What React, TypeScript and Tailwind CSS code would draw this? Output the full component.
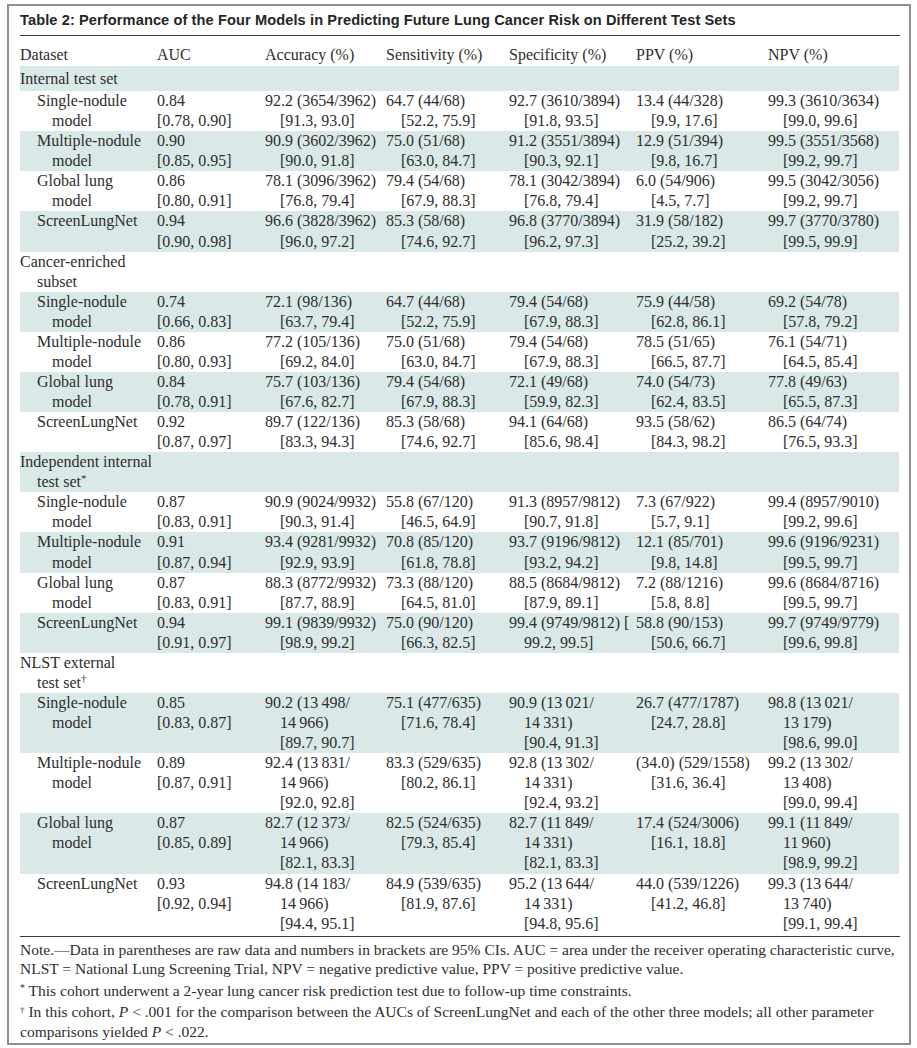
import React from "react";

type Row = {
  label: string[];
  cells: string[][];
  group?: boolean;
};

const t = "\u2009";

const rows: Row[] = [
  { label: ["Internal test set"], cells: [], group: true },
  {
    label: ["Single-nodule", "model"],
    cells: [
      ["0.84", "[0.78, 0.90]"],
      ["92.2 (3654/3962)", "[91.3, 93.0]"],
      ["64.7 (44/68)", "[52.2, 75.9]"],
      ["92.7 (3610/3894)", "[91.8, 93.5]"],
      ["13.4 (44/328)", "[9.9, 17.6]"],
      ["99.3 (3610/3634)", "[99.0, 99.6]"],
    ],
  },
  {
    label: ["Multiple-nodule", "model"],
    cells: [
      ["0.90", "[0.85, 0.95]"],
      ["90.9 (3602/3962)", "[90.0, 91.8]"],
      ["75.0 (51/68)", "[63.0, 84.7]"],
      ["91.2 (3551/3894)", "[90.3, 92.1]"],
      ["12.9 (51/394)", "[9.8, 16.7]"],
      ["99.5 (3551/3568)", "[99.2, 99.7]"],
    ],
  },
  {
    label: ["Global lung", "model"],
    cells: [
      ["0.86", "[0.80, 0.91]"],
      ["78.1 (3096/3962)", "[76.8, 79.4]"],
      ["79.4 (54/68)", "[67.9, 88.3]"],
      ["78.1 (3042/3894)", "[76.8, 79.4]"],
      ["6.0 (54/906)", "[4.5, 7.7]"],
      ["99.5 (3042/3056)", "[99.2, 99.7]"],
    ],
  },
  {
    label: ["ScreenLungNet"],
    cells: [
      ["0.94", "[0.90, 0.98]"],
      ["96.6 (3828/3962)", "[96.0, 97.2]"],
      ["85.3 (58/68)", "[74.6, 92.7]"],
      ["96.8 (3770/3894)", "[96.2, 97.3]"],
      ["31.9 (58/182)", "[25.2, 39.2]"],
      ["99.7 (3770/3780)", "[99.5, 99.9]"],
    ],
  },
  { label: ["Cancer-enriched", "subset"], cells: [], group: true },
  {
    label: ["Single-nodule", "model"],
    cells: [
      ["0.74", "[0.66, 0.83]"],
      ["72.1 (98/136)", "[63.7, 79.4]"],
      ["64.7 (44/68)", "[52.2, 75.9]"],
      ["79.4 (54/68)", "[67.9, 88.3]"],
      ["75.9 (44/58)", "[62.8, 86.1]"],
      ["69.2 (54/78)", "[57.8, 79.2]"],
    ],
  },
  {
    label: ["Multiple-nodule", "model"],
    cells: [
      ["0.86", "[0.80, 0.93]"],
      ["77.2 (105/136)", "[69.2, 84.0]"],
      ["75.0 (51/68)", "[63.0, 84.7]"],
      ["79.4 (54/68)", "[67.9, 88.3]"],
      ["78.5 (51/65)", "[66.5, 87.7]"],
      ["76.1 (54/71)", "[64.5, 85.4]"],
    ],
  },
  {
    label: ["Global lung", "model"],
    cells: [
      ["0.84", "[0.78, 0.91]"],
      ["75.7 (103/136)", "[67.6, 82.7]"],
      ["79.4 (54/68)", "[67.9, 88.3]"],
      ["72.1 (49/68)", "[59.9, 82.3]"],
      ["74.0 (54/73)", "[62.4, 83.5]"],
      ["77.8 (49/63)", "[65.5, 87.3]"],
    ],
  },
  {
    label: ["ScreenLungNet"],
    cells: [
      ["0.92", "[0.87, 0.97]"],
      ["89.7 (122/136)", "[83.3, 94.3]"],
      ["85.3 (58/68)", "[74.6, 92.7]"],
      ["94.1 (64/68)", "[85.6, 98.4]"],
      ["93.5 (58/62)", "[84.3, 98.2]"],
      ["86.5 (64/74)", "[76.5, 93.3]"],
    ],
  },
  { label: ["Independent internal", "test set*"], cells: [], group: true },
  {
    label: ["Single-nodule", "model"],
    cells: [
      ["0.87", "[0.83, 0.91]"],
      ["90.9 (9024/9932)", "[90.3, 91.4]"],
      ["55.8 (67/120)", "[46.5, 64.9]"],
      ["91.3 (8957/9812)", "[90.7, 91.8]"],
      ["7.3 (67/922)", "[5.7, 9.1]"],
      ["99.4 (8957/9010)", "[99.2, 99.6]"],
    ],
  },
  {
    label: ["Multiple-nodule", "model"],
    cells: [
      ["0.91", "[0.87, 0.94]"],
      ["93.4 (9281/9932)", "[92.9, 93.9]"],
      ["70.8 (85/120)", "[61.8, 78.8]"],
      ["93.7 (9196/9812)", "[93.2, 94.2]"],
      ["12.1 (85/701)", "[9.8, 14.8]"],
      ["99.6 (9196/9231)", "[99.5, 99.7]"],
    ],
  },
  {
    label: ["Global lung", "model"],
    cells: [
      ["0.87", "[0.83, 0.91]"],
      ["88.3 (8772/9932)", "[87.7, 88.9]"],
      ["73.3 (88/120)", "[64.5, 81.0]"],
      ["88.5 (8684/9812)", "[87.9, 89.1]"],
      ["7.2 (88/1216)", "[5.8, 8.8]"],
      ["99.6 (8684/8716)", "[99.5, 99.7]"],
    ],
  },
  {
    label: ["ScreenLungNet"],
    cells: [
      ["0.94", "[0.91, 0.97]"],
      ["99.1 (9839/9932)", "[98.9, 99.2]"],
      ["75.0 (90/120)", "[66.3, 82.5]"],
      ["99.4 (9749/9812) [", "99.2, 99.5]"],
      ["58.8 (90/153)", "[50.6, 66.7]"],
      ["99.7 (9749/9779)", "[99.6, 99.8]"],
    ],
  },
  { label: ["NLST external", "test set\u2020"], cells: [], group: true },
  {
    label: ["Single-nodule", "model"],
    cells: [
      ["0.85", "[0.83, 0.87]"],
      [`90.2 (13${t}498/`, `14${t}966)`, "[89.7, 90.7]"],
      ["75.1 (477/635)", "[71.6, 78.4]"],
      [`90.9 (13${t}021/`, `14${t}331)`, "[90.4, 91.3]"],
      ["26.7 (477/1787)", "[24.7, 28.8]"],
      [`98.8 (13${t}021/`, `13${t}179)`, "[98.6, 99.0]"],
    ],
  },
  {
    label: ["Multiple-nodule", "model"],
    cells: [
      ["0.89", "[0.87, 0.91]"],
      [`92.4 (13${t}831/`, `14${t}966)`, "[92.0, 92.8]"],
      ["83.3 (529/635)", "[80.2, 86.1]"],
      [`92.8 (13${t}302/`, `14${t}331)`, "[92.4, 93.2]"],
      ["(34.0) (529/1558)", "[31.6, 36.4]"],
      [`99.2 (13${t}302/`, `13${t}408)`, "[99.0, 99.4]"],
    ],
  },
  {
    label: ["Global lung", "model"],
    cells: [
      ["0.87", "[0.85, 0.89]"],
      [`82.7 (12${t}373/`, `14${t}966)`, "[82.1, 83.3]"],
      ["82.5 (524/635)", "[79.3, 85.4]"],
      [`82.7 (11${t}849/`, `14${t}331)`, "[82.1, 83.3]"],
      ["17.4 (524/3006)", "[16.1, 18.8]"],
      [`99.1 (11${t}849/`, `11${t}960)`, "[98.9, 99.2]"],
    ],
  },
  {
    label: ["ScreenLungNet"],
    cells: [
      ["0.93", "[0.92, 0.94]"],
      [`94.8 (14${t}183/`, `14${t}966)`, "[94.4, 95.1]"],
      ["84.9 (539/635)", "[81.9, 87.6]"],
      [`95.2 (13${t}644/`, `14${t}331)`, "[94.8, 95.6]"],
      ["44.0 (539/1226)", "[41.2, 46.8]"],
      [`99.3 (13${t}644/`, `13${t}740)`, "[99.1, 99.4]"],
    ],
  },
];

const headers = ["Dataset", "AUC", "Accuracy (%)", "Sensitivity (%)", "Specificity (%)", "PPV (%)", "NPV (%)"];

function Label({ text }: { text: string }) {
  // superscript the footnote marks on group labels
  const m = text.match(/^(.*?)([*\u2020])$/);
  if (!m) return <>{text}</>;
  return (
    <>
      {m[1]}
      <sup className="text-[11px]">{m[2]}</sup>
    </>
  );
}

function Cell({ lines, hang = true }: { lines: string[]; hang?: boolean }) {
  return (
    <td className="align-top p-0">
      {lines.map((l, i) => (
        <div key={i} className={i > 0 && hang ? "pl-[15px] whitespace-nowrap" : "whitespace-nowrap"}>
          {l}
        </div>
      ))}
    </td>
  );
}

export default function App() {
  return (
    <div className="bg-white w-[917px] h-[1048px] pt-[4px] pl-[7px] text-[#2e2e2e]">
      <div className="w-[904px] h-[1041px] border-2 border-[#8f8f8f] pl-[11px] pr-[9px]">
        <h1 className="pt-[3px] h-[30px] border-b border-[#3a3a3a] text-[14.6px] leading-[22px] font-bold text-[#262626] font-[family-name:Liberation_Sans,Arial,sans-serif] tracking-[0.1px]">
          Table 2: Performance of the Four Models in Predicting Future Lung Cancer Risk on Different Test Sets
        </h1>
        <table className="w-[879px] table-fixed border-collapse font-[family-name:Liberation_Serif,Times_New_Roman,serif] text-[16px] leading-[20.07px]">
          <colgroup>
            <col className="w-[137px]" />
            <col className="w-[108px]" />
            <col className="w-[121px]" />
            <col className="w-[123px]" />
            <col className="w-[127px]" />
            <col className="w-[132px]" />
            <col className="w-[131px]" />
          </colgroup>
          <thead>
            <tr className="h-[30px]">
              {headers.map((h) => (
                <th key={h} className="p-0 pt-[9px] text-left font-normal align-top whitespace-nowrap">
                  {h}
                </th>
              ))}
            </tr>
          </thead>
          <tbody>
            {rows.map((r, i) => (
              <tr key={i} className={i % 2 === 0 ? "bg-[#dbe8e8]" : ""}>
                {r.group ? (
                  <>
                    <td className={i === 0 ? "align-top p-0 pt-[3px] pb-[2px]" : "align-top p-0"}>
                      {r.label.map((l, j) => (
                        <div key={j} className={j > 0 ? "pl-[17px] whitespace-nowrap" : "whitespace-nowrap"}>
                          <Label text={l} />
                        </div>
                      ))}
                    </td>
                    <td colSpan={6} className="p-0" />
                  </>
                ) : (
                  <>
                    <td className="align-top p-0 pl-[17px]">
                      {r.label.map((l, j) => (
                        <div key={j} className={j > 0 ? "pl-[15px] whitespace-nowrap" : "whitespace-nowrap"}>
                          {l}
                        </div>
                      ))}
                    </td>
                    {r.cells.map((c, j) => (
                      <Cell key={j} lines={c} hang={j !== 0} />
                    ))}
                  </>
                )}
              </tr>
            ))}
          </tbody>
        </table>
        <div className="border-t border-[#3a3a3a] mt-[2px] pt-[3px] font-[family-name:Liberation_Serif,Times_New_Roman,serif] text-[15.5px] leading-[19.5px] whitespace-nowrap">
          <p>
            Note.—Data in parentheses are raw data and numbers in brackets are 95% CIs. AUC = area under the receiver operating characteristic curve,
            <br />
            NLST = National Lung Screening Trial, NPV = negative predictive value, PPV = positive predictive value.
          </p>
          <p className="mt-[2px]">
            <sup className="text-[10px]">*</sup> This cohort underwent a 2-year lung cancer risk prediction test due to follow-up time constraints.
          </p>
          <p className="mt-[2px]">
            <sup className="text-[9px]">†</sup> In this cohort, <i>P</i> &lt; .001 for the comparison between the AUCs of ScreenLungNet and each of the other three models; all other parameter
            <br />
            comparisons yielded <i>P</i> &lt; .022.
          </p>
        </div>
      </div>
    </div>
  );
}
